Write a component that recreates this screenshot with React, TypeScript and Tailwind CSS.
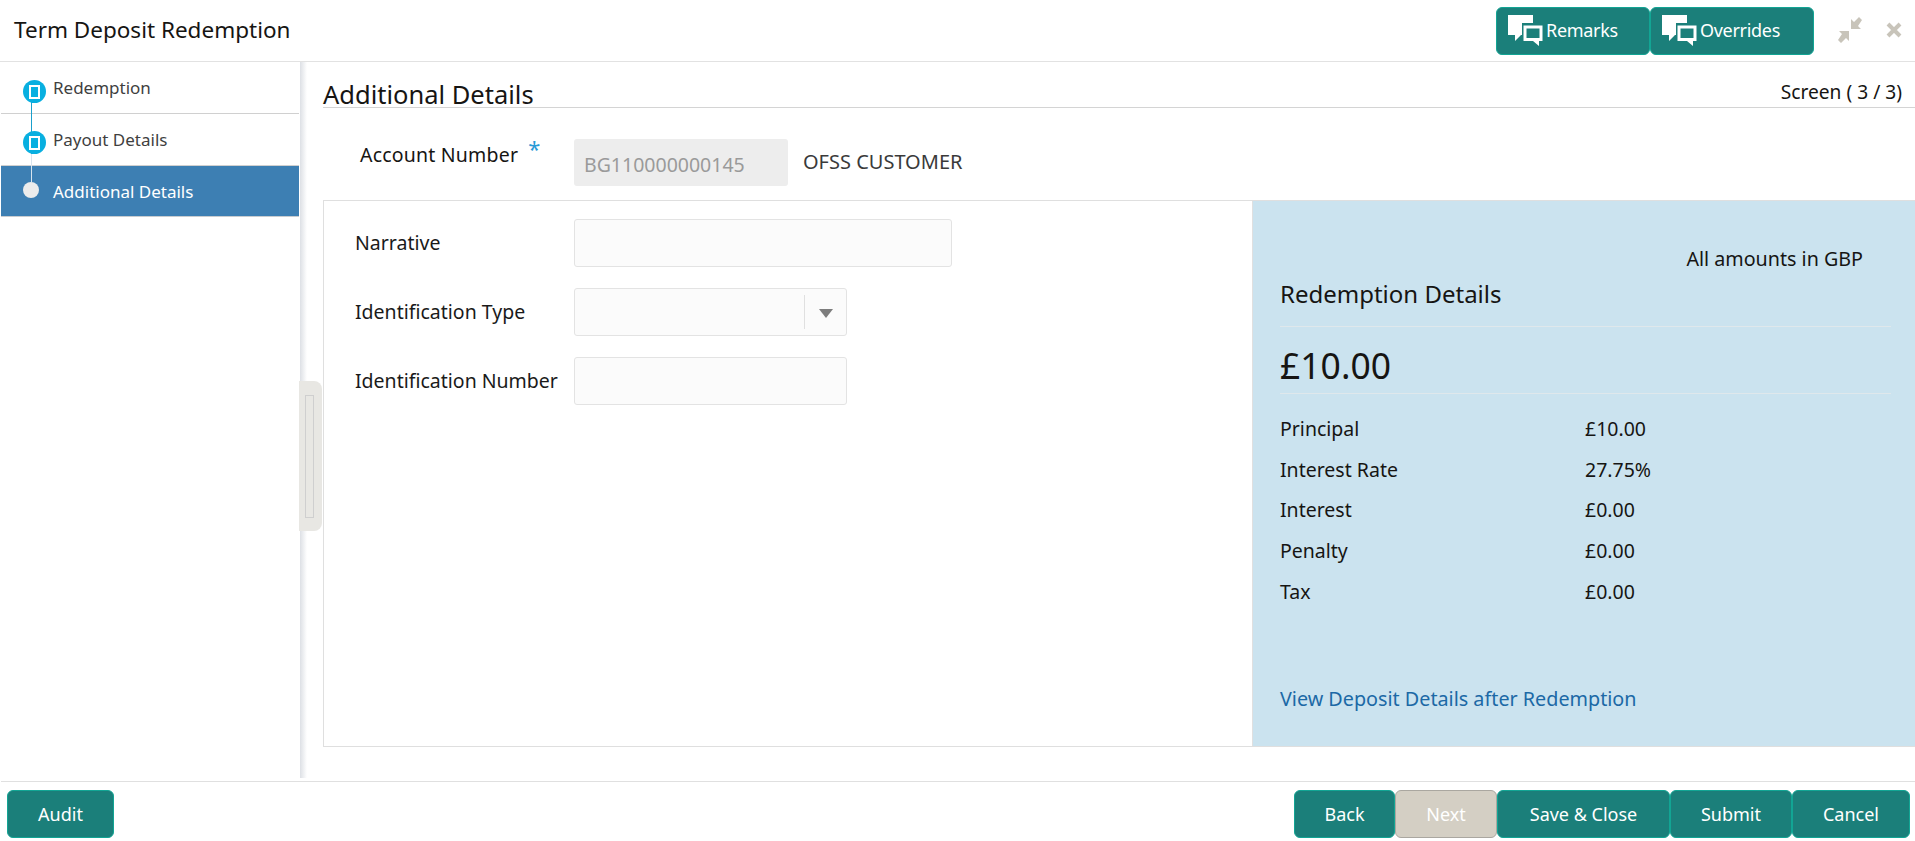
import React from "react";

const Bubbles = () => (
  <svg width="35" height="31" viewBox="0 0 35 31" className="shrink-0">
    <path d="M0 0H25V8H14V20H13L7 26V20H0Z" fill="#fff" />
    <path d="M15.5 10.5H34.5V26H31V31L25 26H15.5Z" fill="#fff" />
    <path d="M18.5 13.5H31.5V23H18.5Z" fill="#1b7f7a" />
  </svg>
);

const Btn = ({ label, className, disabled }: { label: string; className: string; disabled?: boolean }) => (
  <button
    className={
      "h-12 rounded-md text-[18px] " +
      (disabled
        ? "bg-[#d4cfc4] border border-[#aaa7a0] text-white "
        : "bg-[#1b7f7a] border border-[#12a594] text-white ") +
      className
    }
  >
    {label}
  </button>
);

const Step = ({ label, active }: { label: string; active?: boolean }) => (
  <div
    className={
      "flex items-center pl-[52px] pt-[1px] text-[17px] border-b " +
      (active
        ? "h-[51px] bg-[#3d7fb3] text-white border-[#c8ccd0]"
        : "h-[52px] text-[#3f3f3f] border-[#d0d0d0]")
    }
  >
    {label}
  </div>
);

const Node = ({ top }: { top: number }) => (
  <div
    className="absolute left-[23px] w-[23px] h-[23px] rounded-full bg-[#08afe0] flex items-center justify-center"
    style={{ top }}
  >
    <div className="w-[11px] h-[14px] border-2 border-white bg-[#08afe0]" />
  </div>
);

const Row = ({ label, value }: { label: string; value: string }) => (
  <div className="flex items-center h-[40.75px]">
    <div className="w-[305px] text-[19.5px]">{label}</div>
    <div className="text-[19.5px]">{value}</div>
  </div>
);

const Field = ({ label, className, children }: { label: string; className: string; children?: React.ReactNode }) => (
  <div className="flex items-center h-12 mb-[21px]">
    <div className="w-[250px] pl-[31px] shrink-0 text-[19.5px] text-[#1a1a1a] whitespace-nowrap">{label}</div>
    <div className={"h-12 bg-[#fbfbfb] border border-[#e3e3e3] rounded-[3px] " + className}>{children}</div>
  </div>
);

export default function App() {
  return (
    <div className="w-[1915px] h-[841px] overflow-hidden bg-white flex flex-col font-['Noto_Sans',sans-serif] text-[#161513]">
      <header className="h-[62px] shrink-0 border-b border-[#e2e2e2] flex items-center pl-[14px] pr-[13px]">
        <div className="text-[22.5px] flex-1 -mt-[2px]">Term Deposit Redemption</div>
        <button className="w-[154px] h-12 flex items-center pl-[11px] gap-[3px] rounded-md bg-[#1b7f7a] border border-[#12a594] text-white text-[18px] tracking-[-0.3px]">
          <Bubbles />Remarks
        </button>
        <button className="w-[164px] h-12 flex items-center pl-[11px] gap-[3px] rounded-md bg-[#1b7f7a] border border-[#12a594] text-white text-[18px] tracking-[-0.3px]">
          <Bubbles />Overrides
        </button>
        <svg width="26" height="26" viewBox="0 0 26 26" className="ml-[23px] -mt-[1px]">
          <path d="M25 3L22 0L17 5L14 2V12H24L21 9Z M1 23L4 26L9 21L12 24V14H2L5 17Z" fill="#c8c4ba" />
        </svg>
        <svg width="16" height="16" viewBox="0 0 16 16" className="ml-[23px] -mt-[1px]">
          <path d="M2 2L14 14M14 2L2 14" stroke="#c8c4ba" strokeWidth="4" />
        </svg>
      </header>

      <div className="flex-1 flex min-h-0">
        <aside className="relative w-[300px] shrink-0 pl-px">
          <div className="w-[298px]">
            <Step label="Redemption" />
            <Step label="Payout Details" />
            <Step label="Additional Details" active />
          </div>
          <div className="absolute left-[31px] top-[40px] w-px h-[52px] bg-[#1aa0cc]" />
          <div className="absolute left-[31px] top-[92px] w-px h-[28px] bg-[#d8e4ee]" />
          <Node top={18} />
          <Node top={69} />
          <div className="absolute left-[23px] top-[120px] w-4 h-4 rounded-full bg-[#ececec]" />
        </aside>

        <div className="relative w-[23px] shrink-0">
          <div className="w-[7px] h-[716px] bg-gradient-to-r from-[#dde0e5] to-white" />
          <div className="absolute -left-px top-[319px] w-[23px] h-[150px] bg-[#e8e7e3] rounded-r-lg flex items-center">
            <div className="ml-[6px] w-[9px] h-[123px] border border-[#cfcfcf]" />
          </div>
        </div>

        <main className="flex-1 min-w-0 flex flex-col">
          <div className="h-[46px] shrink-0 border-b border-[#d4d4d4] flex items-end justify-between pr-[13px]">
            <div className="text-[25.5px] leading-[32px] -mb-[3px]">Additional Details</div>
            <div className="text-[19.2px] leading-[28px] mb-[1px]">Screen ( 3 / 3)</div>
          </div>

          <div className="h-[92px] shrink-0 flex items-start pt-[31px] relative">
            <div className="w-[251px] pl-[37px] pt-[1px] text-[19.5px] tracking-[0.2px] flex">
              Account Number <span className="text-[#2a9ad6] text-[22px] leading-[16px] ml-[10px]">*</span>
            </div>
            <div className="w-[214px] h-[47px] bg-[#ededed] rounded-[3px] flex items-center pl-[10px] text-[#9a9a9a] text-[19.5px] pt-[5px]">
              BG110000000145
            </div>
            <div className="ml-[15px] pt-[8px] text-[20px] text-[#3a3a3a]">OFSS CUSTOMER</div>
          </div>

          <div className="h-[547px] shrink-0 border-l border-t border-b border-[#dfdfdf] flex">
            <div className="w-[928px] shrink-0 pt-[18px]">
              <Field label="Narrative" className="w-[378px]" />
              <Field label="Identification Type" className="w-[273px] flex items-center justify-end">
                <div className="w-[42px] h-[34px] border-l border-[#e0e0e0] flex items-center justify-center">
                  <div className="w-0 h-0 mt-[2px] border-x-[7px] border-x-transparent border-t-[9px] border-t-[#7d7d7d]" />
                </div>
              </Field>
              <Field label="Identification Number" className="w-[273px]" />
            </div>
            <div className="flex-1 bg-[#cbe3ef] pl-[27px] pr-[24px] relative border-l border-[#e0e0e0]">
              <div className="h-[125px] flex items-end pb-[16px] relative">
                <div className="absolute right-[28px] top-[43px] text-[19.7px]">All amounts in GBP</div>
                <div className="text-[24px] leading-[32px]">Redemption Details</div>
              </div>
              <div className="h-[68px] border-t border-b border-[#dfe8ec] flex items-center pt-[9px]">
                <div className="text-[35.5px] leading-[50px]">£10.00</div>
              </div>
              <div className="pt-[14px]">
                <Row label="Principal" value="£10.00" />
                <Row label="Interest Rate" value="27.75%" />
                <Row label="Interest" value="£0.00" />
                <Row label="Penalty" value="£0.00" />
                <Row label="Tax" value="£0.00" />
              </div>
              <div className="absolute left-[27px] top-[483px] text-[19.75px] text-[#1c69a6]">
                View Deposit Details after Redemption
              </div>
            </div>
          </div>
        </main>
      </div>

      <footer className="h-[60px] shrink-0 border-t border-[#e0e0e0] ml-px flex items-start pt-[8px] pl-[6px] pr-[5px]">
        <Btn label="Audit" className="w-[107px]" />
        <div className="flex-1" />
        <Btn label="Back" className="w-[101px]" />
        <Btn label="Next" className="w-[102px]" disabled />
        <Btn label="Save & Close" className="w-[173px]" />
        <Btn label="Submit" className="w-[122px]" />
        <Btn label="Cancel" className="w-[118px]" />
      </footer>
    </div>
  );
}
